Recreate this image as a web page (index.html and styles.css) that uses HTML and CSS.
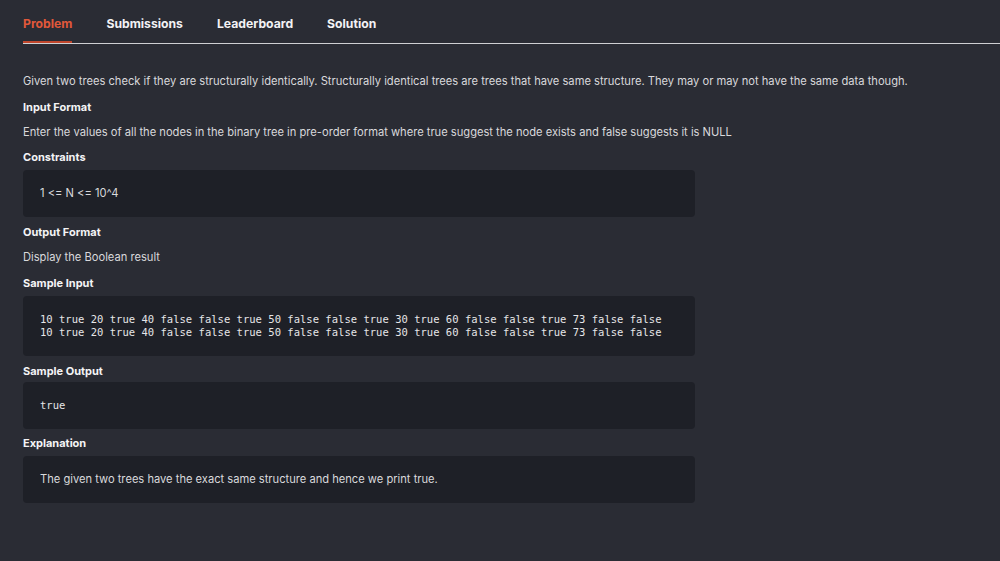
FILE: index.html
```html
<!DOCTYPE html>
<html>
<head>
    <meta charset="UTF-8">
    <link rel="stylesheet" href="styles.css">
</head>
<body>
    <ul class="tabs">
        <li><a class="active">Problem</a></li>
        <li><a>Submissions</a></li>
        <li><a>Leaderboard</a></li>
        <li><a>Solution</a></li>
    </ul>
    <div class="problem">
        <p>Given two trees check if they are structurally identically. Structurally identical trees are trees that have same structure. They may or may not have the same data though.</p>
        <h3>Input Format</h3>
        <p>Enter the values of all the nodes in the binary tree in pre-order format where true suggest the node exists and false suggests it is NULL</p>
        <h3>Constraints</h3>
        <div class="box">1 &lt;= N &lt;= 10^4</div>
        <h3>Output Format</h3>
        <p>Display the Boolean result</p>
        <h3>Sample Input</h3>
        <pre class="box code">10 true 20 true 40 false false true 50 false false true 30 true 60 false false true 73 false false
10 true 20 true 40 false false true 50 false false true 30 true 60 false false true 73 false false</pre>
        <h3 class="tight">Sample Output</h3>
        <pre class="box code">true</pre>
        <h3 class="close">Explanation</h3>
        <div class="box">The given two trees have the exact same structure and hence we print true.</div>
    </div>
</body>
</html>
```

FILE: styles.css
```css
body {
    margin: 0;
    background-color: #2a2c34;
    color: #d9d9dc;
    font-family: "Inter", "Noto Sans", sans-serif;
    font-size: 11.15px;
}

.tabs {
    list-style-type: none;
    margin: 0 0 0 23px;
    padding: 0;
    display: flex;
    border-bottom: 1px solid #cfd0d3;
    height: 43px;
}

    .tabs li {
        margin-right: 34px;
    }

        .tabs li a {
            display: block;
            padding-top: 16px;
            height: 25px;
            font-weight: 700;
            font-size: 12.2px;
            color: #f2f2f4;
            cursor: pointer;
        }

            .tabs li a.active {
                color: #e0583a;
                border-bottom: 2px solid #c0462c;
            }

.problem {
    padding: 27px 0 0 23px;
}

    .problem p {
        margin: 0 0 5.5px 0;
        line-height: 20px;
    }

    .problem h3 {
        margin: 5px 0 3px 0;
        line-height: 20px;
        font-size: 11px;
        font-weight: 700;
        color: #f4f4f6;
    }

        .problem h3 + p {
            margin-top: 5px;
        }

        /* pequeños ajustes de los dos ultimos titulos */
        .problem h3.tight {
            margin-bottom: 1px;
        }

        .problem h3.close {
            margin-top: 4px;
        }

.box {
    width: 638px;
    margin: 0;
    padding: 17px;
    line-height: 13px;
    background-color: #1e2027;
    border-radius: 4px;
}

.code {
    font-family: "DejaVu Sans Mono", monospace;
    font-size: 10.5px;
    letter-spacing: 0.02px;
    color: #e6e6e8;
}
```
